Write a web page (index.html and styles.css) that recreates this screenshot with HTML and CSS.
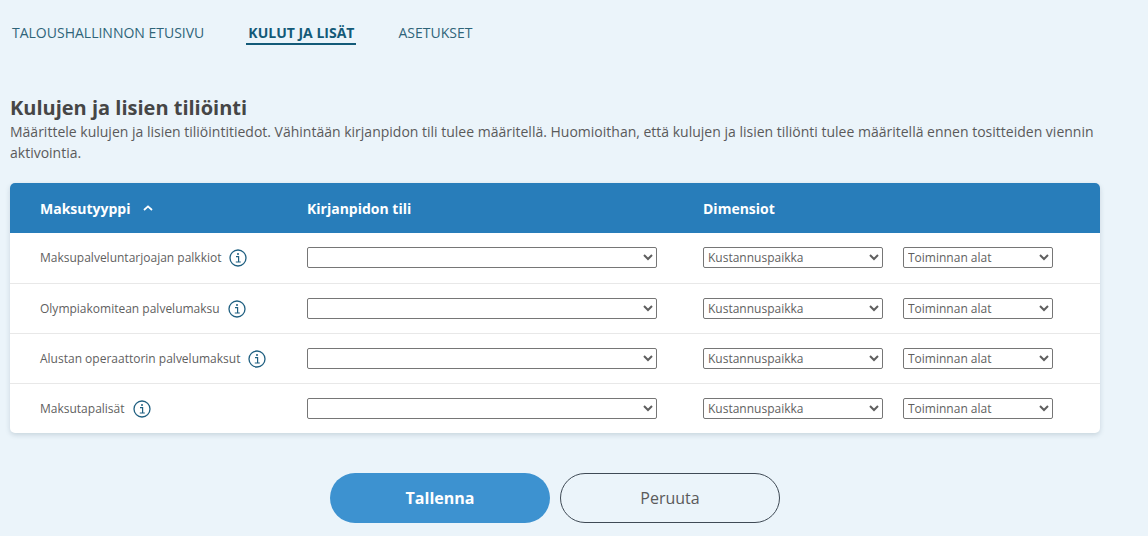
FILE: index.html
```html
<!DOCTYPE html>
<html lang="fi">
<head>
    <meta charset="UTF-8">
    <meta name="viewport" content="width=device-width, initial-scale=1.0">
    <title>Kulut ja lisät</title>
    <link rel="stylesheet" href="styles.css">
</head>
<body>
    <nav class="tabs">
        <a class="tab" href="#">TALOUSHALLINNON ETUSIVU</a>
        <a class="tab active" href="#">KULUT JA LISÄT</a>
        <a class="tab" href="#">ASETUKSET</a>
    </nav>

    <main class="content">
        <h1 class="title">Kulujen ja lisien tiliöinti</h1>
        <p class="intro">Määrittele kulujen ja lisien tiliöintitiedot. Vähintään kirjanpidon tili tulee määritellä. Huomioithan, että kulujen ja lisien tiliönti tulee määritellä ennen tositteiden viennin aktivointia.</p>

        <div class="card">
            <div class="row head">
                <div class="type">Maksutyyppi
                    <svg class="sort" width="10" height="6" viewBox="0 0 10 6"><path d="M1 5l4-3.6L9 5" fill="none" stroke="#fff" stroke-width="1.8"/></svg>
                </div>
                <div>Kirjanpidon tili</div>
                <div>Dimensiot</div>
            </div>

            <div class="row">
                <div class="type">Maksupalveluntarjoajan palkkiot
                    <svg class="info" width="18" height="18" viewBox="0 0 18 18"><circle cx="9" cy="9" r="8" fill="none" stroke="#1f5f80" stroke-width="1.3"/><path d="M7 7.6h2.6v5.2M6.8 13h5" fill="none" stroke="#1f5f80" stroke-width="1.2"/><circle cx="9" cy="4.9" r="1" fill="#1f5f80"/></svg>
                </div>
                <select class="account"><option></option></select>
                <div class="dims">
                    <select class="place"><option>Kustannuspaikka</option></select>
                    <select class="field"><option>Toiminnan alat</option></select>
                </div>
            </div>

            <div class="row">
                <div class="type">Olympiakomitean palvelumaksu
                    <svg class="info" width="18" height="18" viewBox="0 0 18 18"><circle cx="9" cy="9" r="8" fill="none" stroke="#1f5f80" stroke-width="1.3"/><path d="M7 7.6h2.6v5.2M6.8 13h5" fill="none" stroke="#1f5f80" stroke-width="1.2"/><circle cx="9" cy="4.9" r="1" fill="#1f5f80"/></svg>
                </div>
                <select class="account"><option></option></select>
                <div class="dims">
                    <select class="place"><option>Kustannuspaikka</option></select>
                    <select class="field"><option>Toiminnan alat</option></select>
                </div>
            </div>

            <div class="row">
                <div class="type">Alustan operaattorin palvelumaksut
                    <svg class="info" width="18" height="18" viewBox="0 0 18 18"><circle cx="9" cy="9" r="8" fill="none" stroke="#1f5f80" stroke-width="1.3"/><path d="M7 7.6h2.6v5.2M6.8 13h5" fill="none" stroke="#1f5f80" stroke-width="1.2"/><circle cx="9" cy="4.9" r="1" fill="#1f5f80"/></svg>
                </div>
                <select class="account"><option></option></select>
                <div class="dims">
                    <select class="place"><option>Kustannuspaikka</option></select>
                    <select class="field"><option>Toiminnan alat</option></select>
                </div>
            </div>

            <div class="row">
                <div class="type">Maksutapalisät
                    <svg class="info" width="18" height="18" viewBox="0 0 18 18"><circle cx="9" cy="9" r="8" fill="none" stroke="#1f5f80" stroke-width="1.3"/><path d="M7 7.6h2.6v5.2M6.8 13h5" fill="none" stroke="#1f5f80" stroke-width="1.2"/><circle cx="9" cy="4.9" r="1" fill="#1f5f80"/></svg>
                </div>
                <select class="account"><option></option></select>
                <div class="dims">
                    <select class="place"><option>Kustannuspaikka</option></select>
                    <select class="field"><option>Toiminnan alat</option></select>
                </div>
            </div>
        </div>

        <div class="actions">
            <button class="btn save">Tallenna</button>
            <button class="btn cancel">Peruuta</button>
        </div>
    </main>
</body>
</html>
```

FILE: styles.css
```css
* {
    margin: 0;
    padding: 0;
    box-sizing: border-box;
    font-family: "Open Sans", sans-serif;
}
html, body {
    height: 100%;
    overflow: hidden;
}
body {
    background: #ebf4fa;
    color: #4a4a4a;
}
.tabs {
    display: flex;
    gap: 44px;
    padding: 24px 0 0 12px;
    height: 96px;
}
.tab {
    height: 21px;
    line-height: 18px;
    font-size: 14px;
    color: #2f6479;
    text-decoration: none;
}
.active {
    margin: 0 -2px;
    padding: 0 2px;
    font-weight: 700;
    color: #135a78;
    border-bottom: 2px solid #135a78;
}
.content {
    padding: 0 48px 0 10px;
}
.title {
    font-size: 20px;
    line-height: 24px;
    font-weight: 700;
    color: #464646;
}
.intro {
    margin-top: 1px;
    font-size: 14px;
    line-height: 21px;
    color: #5a5a5a;
}
.card {
    margin-top: 20px;
    background: #fff;
    border-radius: 5px;
    box-shadow: 0 2px 5px rgba(60, 90, 110, 0.2);
}
.row {
    display: grid;
    grid-template-columns: 267px 396px 1fr;
    align-items: center;
    height: 50px;
    padding-left: 30px;
    font-size: 12px;
    color: #5f5f5f;
    border-top: 1px solid #e8e8e8;
}
.row:nth-child(2) {
    border-top: 0;
    padding-bottom: 1px;
}
.head {
    background: #287dba;
    border-top: 0;
    border-radius: 5px 5px 0 0;
    font-size: 14px;
    font-weight: 700;
    color: #fff;
}
.type {
    display: flex;
    align-items: center;
    gap: 8px;
}
.sort {
    margin-left: 4px;
}
.dims {
    display: flex;
    gap: 20px;
}
select {
    height: 21px;
    padding-left: 0;
    font-size: 12px;
    color: #5f5f5f;
    background: #fff;
    border: 1px solid #767676;
    border-radius: 2px;
}
.account {
    width: 350px;
}
.place {
    width: 180px;
}
.field {
    width: 150px;
}
.actions {
    display: flex;
    gap: 10px;
    margin-top: 40px;
    padding-left: 320px;
}
.btn {
    width: 220px;
    height: 50px;
    border-radius: 25px;
    font-size: 16px;
    cursor: pointer;
}
.save {
    background: #3d92d0;
    border: 0;
    font-weight: 700;
    color: #fff;
}
.cancel {
    background: transparent;
    border: 1px solid #3f4a55;
    color: #5a5a5a;
}
```
